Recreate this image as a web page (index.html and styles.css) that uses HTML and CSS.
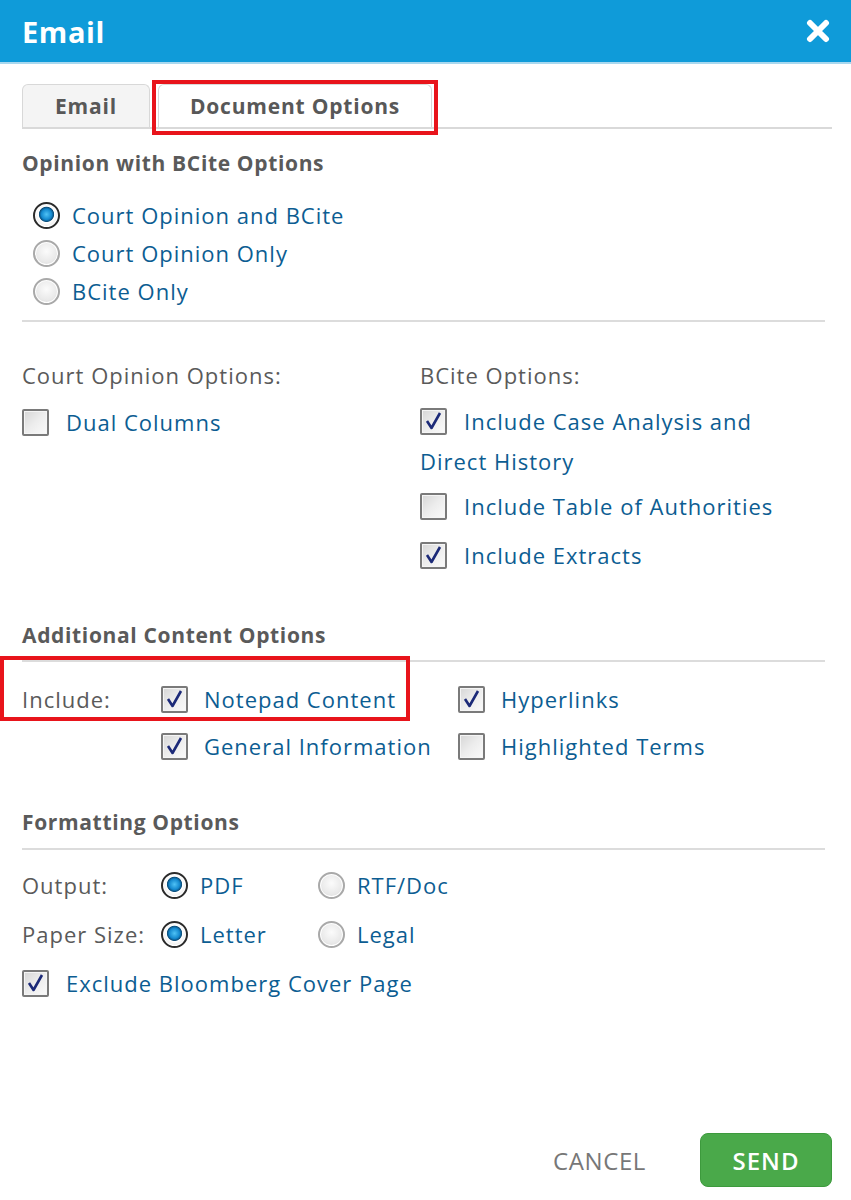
FILE: index.html
```html
<!DOCTYPE html>
<html>
<head>
<meta charset="utf-8">
<link rel="stylesheet" href="styles.css">
</head>
<body>
<div class="dialog">
  <div class="header">
    <span class="title">Email</span>
    <svg class="close" width="24" height="24" viewBox="0 0 24 24"><path d="M4 4 L20 20 M20 4 L4 20" stroke="#fff" stroke-width="6" stroke-linecap="round"/></svg>
  </div>

  <div class="tabs">
    <div class="tab">Email</div>
    <div class="tab active">Document Options<span class="redbox tabbox"></span></div>
  </div>

  <div class="body">
    <h2 class="heading first">Opinion with BCite Options</h2>
    <div class="radiolist">
      <div class="row"><span class="radio on"></span><span class="lbl">Court Opinion and BCite</span></div>
      <div class="row"><span class="radio"></span><span class="lbl">Court Opinion Only</span></div>
      <div class="row"><span class="radio"></span><span class="lbl">BCite Only</span></div>
    </div>
    <div class="rule r1"></div>

    <div class="cols">
      <div class="col left">
        <div class="sublabel">Court Opinion Options:</div>
        <div class="items">
          <div class="item"><span class="cb"></span><span class="lbl">Dual Columns</span></div>
        </div>
      </div>
      <div class="col right">
        <div class="sublabel">BCite Options:</div>
        <div class="items">
          <div class="item wrap"><span class="cb on"><svg viewBox="0 0 27 27"><path d="M7 13 L11.5 20 L20 5" fill="none" stroke="#1c2a78" stroke-width="2.6" stroke-linejoin="round"/></svg></span><span class="lbl">Include Case Analysis and Direct History</span></div>
          <div class="item toa"><span class="cb"></span><span class="lbl">Include Table of Authorities</span></div>
          <div class="item ext"><span class="cb on"><svg viewBox="0 0 27 27"><path d="M7 13 L11.5 20 L20 5" fill="none" stroke="#1c2a78" stroke-width="2.6" stroke-linejoin="round"/></svg></span><span class="lbl">Include Extracts</span></div>
        </div>
      </div>
    </div>

    <h2 class="heading h-add">Additional Content Options</h2>
    <div class="rule r2"></div>
    <div class="include">
      <span class="redbox incbox"></span>
      <div class="grid3">
        <div class="glabel">Include:</div>
        <div class="item"><span class="cb on"><svg viewBox="0 0 27 27"><path d="M7 13 L11.5 20 L20 5" fill="none" stroke="#1c2a78" stroke-width="2.6" stroke-linejoin="round"/></svg></span><span class="lbl">Notepad Content</span></div>
        <div class="item"><span class="cb on"><svg viewBox="0 0 27 27"><path d="M7 13 L11.5 20 L20 5" fill="none" stroke="#1c2a78" stroke-width="2.6" stroke-linejoin="round"/></svg></span><span class="lbl">Hyperlinks</span></div>
        <div class="glabel"></div>
        <div class="item"><span class="cb on"><svg viewBox="0 0 27 27"><path d="M7 13 L11.5 20 L20 5" fill="none" stroke="#1c2a78" stroke-width="2.6" stroke-linejoin="round"/></svg></span><span class="lbl">General Information</span></div>
        <div class="item"><span class="cb"></span><span class="lbl">Highlighted Terms</span></div>
      </div>
    </div>

    <h2 class="heading h-fmt">Formatting Options</h2>
    <div class="rule r3"></div>
    <div class="fmt">
      <div class="glabel">Output:</div>
      <div class="item"><span class="radio on"></span><span class="lbl">PDF</span></div>
      <div class="item"><span class="radio"></span><span class="lbl">RTF/Doc</span></div>
      <div class="glabel">Paper Size:</div>
      <div class="item"><span class="radio on"></span><span class="lbl">Letter</span></div>
      <div class="item"><span class="radio"></span><span class="lbl">Legal</span></div>
    </div>
    <div class="item exclude"><span class="cb on"><svg viewBox="0 0 27 27"><path d="M7 13 L11.5 20 L20 5" fill="none" stroke="#1c2a78" stroke-width="2.6" stroke-linejoin="round"/></svg></span><span class="lbl">Exclude Bloomberg Cover Page</span></div>
  </div>

  <div class="footer">
    <span class="cancel">CANCEL</span>
    <span class="send">SEND</span>
  </div>
</div>
</body>
</html>
```

FILE: styles.css
```css
* { box-sizing: border-box; }
html, body { margin: 0; padding: 0; background: #fff; }
body { font-family: "Open Sans", "DejaVu Sans", sans-serif; }

.dialog {
  width: 851px;
  height: 1200px;
  display: flex;
  flex-direction: column;
  position: relative;
}

.header {
  height: 64px;
  background: #0f9bd9;
  display: flex;
  align-items: center;
  justify-content: space-between;
  padding: 0 21px 0 22px;
  border-bottom: 2px solid #a8d8ef;
}
.title {
  color: #fff;
  font-size: 29px;
  font-weight: 700;
  letter-spacing: 0.6px;
}
.close { display: block; }

.tabs {
  margin: 20px 19px 0 22px;
  display: flex;
  gap: 8px;
  border-bottom: 2px solid #d9d9d9;
  height: 45px;
}
.tab {
  position: relative;
  height: 43px;
  border: 1px solid #d8d8d8;
  border-bottom: none;
  border-radius: 6px 6px 0 0;
  background: #f4f4f4;
  color: #585858;
  font-size: 21px;
  font-weight: 700;
  letter-spacing: 0.8px;
  display: flex;
  align-items: center;
  justify-content: center;
  width: 128px;
}
.tab.active {
  width: 274px;
  background: #fff;
}
.redbox {
  position: absolute;
  border: 4px solid #e8141b;
  pointer-events: none;
}
.tabbox { left: -7px; top: -5px; right: -7px; bottom: -8px; }

.body { padding: 0 0 0 22px; }

.heading {
  margin: 0;
  font-size: 21px;
  line-height: 30px;
  font-weight: 700;
  color: #5a5a5a;
  letter-spacing: 0.65px;
}
.heading.first { margin-top: 19px; }

.lbl {
  color: #0c5d92;
  font-size: 22px;
  letter-spacing: 1px;
}
.row, .item {
  display: flex;
  align-items: center;
  height: 38px;
}
.radiolist { margin: 18px 0 0 11px; }
.row .lbl { margin-left: 12px; }

.radio {
  flex: none;
  width: 27px;
  height: 27px;
  border-radius: 50%;
  border: 2px solid #a9a9a9;
  background: radial-gradient(circle at 50% 40%, #fbfbfb 0%, #e9e9e9 60%, #d2d2d2 100%);
  box-shadow: inset 0 0 0 1px #fff;
  position: relative;
}
.radio.on {
  border: 2px solid #2b2b2b;
  background: radial-gradient(circle at 50% 45%, #4fc2f5 0%, #1489cf 30%, #0b4f7d 42%, #ffffff 47%, #e8e8e8 75%, #bdbdbd 100%);
}

.rule {
  height: 2px;
  background: #dcdcdc;
  margin-right: 26px;
}
.r1 { margin-top: 10px; }

.cols {
  display: flex;
  margin-top: 38px;
}
.col.left { width: 398px; }
.col.right { width: 385px; }
.sublabel {
  font-size: 22px;
  line-height: 30px;
  color: #5a5a5a;
  letter-spacing: 1px;
}
.items { margin-top: 13px; display: flex; flex-direction: column; }
.col .item .lbl { margin-left: 17px; }

.item.wrap {
  display: block;
  height: 76px;
  line-height: 37px;
}
.item.wrap .cb {
  display: inline-block;
  vertical-align: -5px;
}
.item.toa { margin-top: 8px; }
.item.ext { margin-top: 11px; }

.cb {
  flex: none;
  width: 27px;
  height: 27px;
  border: 2px solid #7a7a7a;
  border-radius: 2px;
  background: linear-gradient(135deg, #d6d6d6 0%, #ededed 50%, #fafafa 100%);
  box-shadow: inset 0 0 0 1px #f5f5f5;
  position: relative;
}
.cb svg {
  position: absolute;
  left: -2px; top: -2px;
  width: 27px; height: 27px;
}

.h-add { margin-top: 46px; }
.r2 { margin-top: 10px; }

.include { position: relative; margin-top: 18px; }
.incbox { left: -22px; top: -24px; width: 410px; height: 65px; }
.grid3 {
  display: grid;
  grid-template-columns: 139px 297px auto;
  row-gap: 9px;
}
.glabel {
  font-size: 22px;
  color: #5a5a5a;
  height: 38px;
  line-height: 38px;
  letter-spacing: 1px;
}
.grid3 .item .lbl { margin-left: 16px; }

.h-fmt { margin-top: 42px; }
.r3 { margin-top: 11px; }

.fmt {
  margin-top: 16px;
  display: grid;
  grid-template-columns: 139px 157px auto;
  row-gap: 11px;
}
.fmt .item .lbl { margin-left: 12px; }

.exclude { margin-top: 11px; }
.exclude .lbl { margin-left: 17px; }

.footer {
  margin-top: auto;
  display: flex;
  justify-content: flex-end;
  align-items: center;
  padding: 0 19px 13px 0;
  gap: 54px;
}
.cancel {
  color: #777;
  font-size: 24px;
  letter-spacing: 0.6px;
}
.send {
  width: 132px;
  height: 54px;
  border-radius: 8px;
  background: #4aa94a;
  border: 1px solid #3d9a3d;
  color: #fff;
  font-size: 24px;
  font-weight: 600;
  letter-spacing: 1px;
  display: flex;
  align-items: center;
  justify-content: center;
}
```
